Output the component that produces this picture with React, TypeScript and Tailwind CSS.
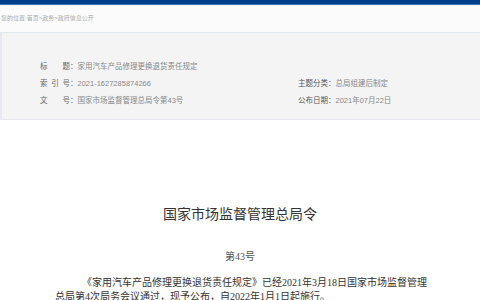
const font = { fontFamily: '"Liberation Sans", "Noto Sans CJK SC", sans-serif' };

function Label({ chars }: { chars: string[] }) {
  return (
    <span className="flex items-center">
      <span className="flex w-[30px] justify-between text-[#666]">
        {chars.map((c) => (
          <span key={c}>{c}</span>
        ))}
      </span>
      <span className="text-[#666]">：</span>
    </span>
  );
}

const rows = [
  { left: ['标', '题'], value: '家用汽车产品修理更换退货责任规定' },
  { left: ['索', '引', '号'], value: '2021-1627285874266', rl: '主题分类：', rv: '总局组建后制定' },
  { left: ['文', '号'], value: '国家市场监督管理总局令第43号', rl: '公布日期：', rv: '2021年07月22日' },
];

export default function App() {
  return (
    <div className="h-[300px] w-[480px] overflow-hidden bg-white" style={font}>
      <div className="h-[4px] bg-[#003e8b]" />
      <div className="h-[1px] bg-[#3f74b8]" />
      <div className="flex h-[28px] items-center border-b border-[#e3e7ef] bg-[#fbfbfb] pl-[1px] text-[6px] text-[#aaa]">
        您的位置:首页&gt;政务&gt;政府信息公开
      </div>
      <div className="h-[87px] border-b border-l-2 border-[#e8e8ee] bg-[#f4f4f4] pt-[25px] text-[7.5px]">
        {rows.map((r) => (
          <div key={r.value} className="flex h-[17px] items-center">
            <div className="flex w-[296px] items-center pl-[38px]">
              <Label chars={r.left} />
              <span className="text-[#888]">{r.value}</span>
            </div>
            {r.rl && (
              <div className="flex items-center">
                <span className="text-[#555]">{r.rl}</span>
                <span className="text-[#888]">{r.rv}</span>
              </div>
            )}
          </div>
        ))}
      </div>
      <h1 className="mt-[84px] text-center text-[14px] leading-[20px] text-[#333]">国家市场监督管理总局令</h1>
      <div
        className="mt-[26px] text-center text-[10px] leading-[14px] text-[#555]"
        style={{ fontFamily: '"Liberation Serif", "Noto Sans CJK SC", serif' }}
      >
        第43号
      </div>
      <p
        className="mt-[12px] ml-[55px] w-[380px] indent-[27px] text-[10px] leading-[14px] text-[#333]"
        style={{ fontFamily: '"Liberation Serif", "Noto Sans CJK SC", serif' }}
      >
        《家用汽车产品修理更换退货责任规定》已经2021年3月18日国家市场监督管理总局第4次局务会议通过，现予公布，自2022年1月1日起施行。
      </p>
    </div>
  );
}
